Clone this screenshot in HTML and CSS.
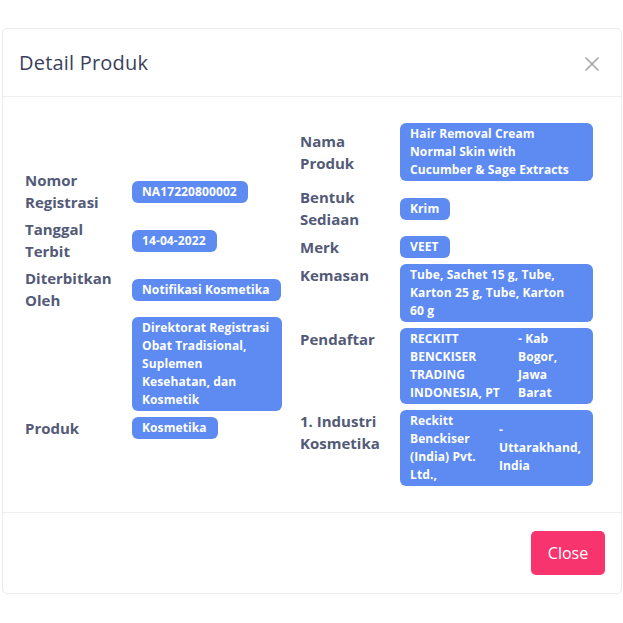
FILE: index.html
```html
<!DOCTYPE html>
<html lang="id">
<head>
<meta charset="utf-8">
<title>Detail Produk</title>
<link rel="stylesheet" href="styles.css">
</head>
<body>
<div class="modal">
  <div class="modal-header">
    <h5 class="modal-title">Detail Produk</h5>
    <button class="x-btn" aria-label="Close">
      <svg width="14" height="14" viewBox="0 0 14 14"><path d="M1 1 L13 13 M13 1 L1 13" stroke="#a5a5a5" stroke-width="1.6" stroke-linecap="round" fill="none"/></svg>
    </button>
  </div>
  <div class="modal-body">
    <div class="info left">
      <div class="label">Nomor<br>Registrasi</div>
      <div class="badge">NA17220800002</div>

      <div class="label">Tanggal<br>Terbit</div>
      <div class="badge">14-04-2022</div>

      <div class="label">Diterbitkan<br>Oleh</div>
      <div class="badge">Notifikasi Kosmetika</div>

      <div class="label"></div>
      <div class="badge block">Direktorat Registrasi<br>Obat Tradisional,<br>Suplemen<br>Kesehatan, dan<br>Kosmetik</div>

      <div class="label">Produk</div>
      <div class="badge">Kosmetika</div>
    </div>

    <div class="info right">
      <div class="label">Nama<br>Produk</div>
      <div class="badge block">Hair Removal Cream<br>Normal Skin with<br>Cucumber &amp; Sage Extracts</div>

      <div class="label">Bentuk<br>Sediaan</div>
      <div class="badge">Krim</div>

      <div class="label">Merk</div>
      <div class="badge">VEET</div>

      <div class="label top">Kemasan</div>
      <div class="badge block">Tube, Sachet 15 g, Tube,<br>Karton 25 g, Tube, Karton<br>60 g</div>

      <div class="label top">Pendaftar</div>
      <div class="badge block split">
        <div class="part p1">RECKITT<br>BENCKISER<br>TRADING<br>INDONESIA, PT</div>
        <div class="part">- Kab<br>Bogor,<br>Jawa<br>Barat</div>
      </div>

      <div class="label top">1. Industri<br>Kosmetika</div>
      <div class="badge block split">
        <div class="part p2">Reckitt<br>Benckiser<br>(India) Pvt.<br>Ltd.,</div>
        <div class="part">-<br>Uttarakhand,<br>India</div>
      </div>
    </div>
  </div>
  <div class="modal-footer">
    <button class="btn-close">Close</button>
  </div>
</div>
</body>
</html>
```

FILE: styles.css
```css
html, body {
  margin: 0;
  padding: 0;
  background: #ffffff;
}

body {
  font-family: "Open Sans", "Noto Sans", sans-serif;
}

.modal {
  margin: 28px 1px 0 2px;
  width: 620px;
  height: 566px;
  box-sizing: border-box;
  border: 1px solid #eaebef;
  border-radius: 5px;
  display: flex;
  flex-direction: column;
  background: #fff;
}

.modal-header {
  height: 68px;
  box-sizing: border-box;
  border-bottom: 1px solid #eceef2;
  display: flex;
  align-items: center;
  justify-content: space-between;
  padding: 0 22px 0 16px;
}

.modal-title {
  margin: 0;
  font-size: 20px;
  font-weight: 500;
  color: #3b3f5c;
  letter-spacing: 0.2px;
}

.x-btn {
  border: 0;
  background: transparent;
  padding: 0;
  width: 14px;
  height: 14px;
  display: flex;
  margin-top: 2px;
}

.modal-body {
  flex: 1;
  display: flex;
  align-items: center;
  gap: 18px;
  padding: 0 28px 0 22px;
}

.info {
  display: grid;
  row-gap: 4px;
  align-items: center;
}

.info.left {
  grid-template-columns: 107px 150px;
  width: 257px;
}

.info.right {
  grid-template-columns: 100px 193px;
  width: 293px;
}

.label {
  font-size: 15px;
  font-weight: 700;
  line-height: 22px;
  padding-bottom: 1px;
  color: #535a78;
}

.label.top {
  align-self: start;
  margin-top: 1px;
}

.badge {
  justify-self: start;
  align-self: center;
  margin: 1px 0;
  background: #5d8bf1;
  color: #ffffff;
  font-size: 12px;
  font-weight: 700;
  line-height: 18px;
  padding: 2px 11px 2px 10px;
  border-radius: 6px;
  white-space: nowrap;
  letter-spacing: 0.1px;
}

.badge.block {
  justify-self: stretch;
}

.info.right .badge.block {
  align-self: start;
}

.info.right .badge.block:first-of-type {
  align-self: center;
}

.split {
  display: flex;
  align-items: center;
}

.part.p1 {
  width: 108px;
}

.part.p2 {
  width: 89px;
}

.modal-footer {
  height: 81px;
  box-sizing: border-box;
  border-top: 1px solid #eceef2;
  display: flex;
  align-items: center;
  justify-content: flex-end;
  padding: 0 16px;
}

.btn-close {
  width: 74px;
  height: 44px;
  border: 0;
  border-radius: 5px;
  background: #f8346f;
  color: #ffffff;
  font-family: "Open Sans", "Noto Sans", sans-serif;
  font-size: 16px;
  font-weight: 400;
}
```
